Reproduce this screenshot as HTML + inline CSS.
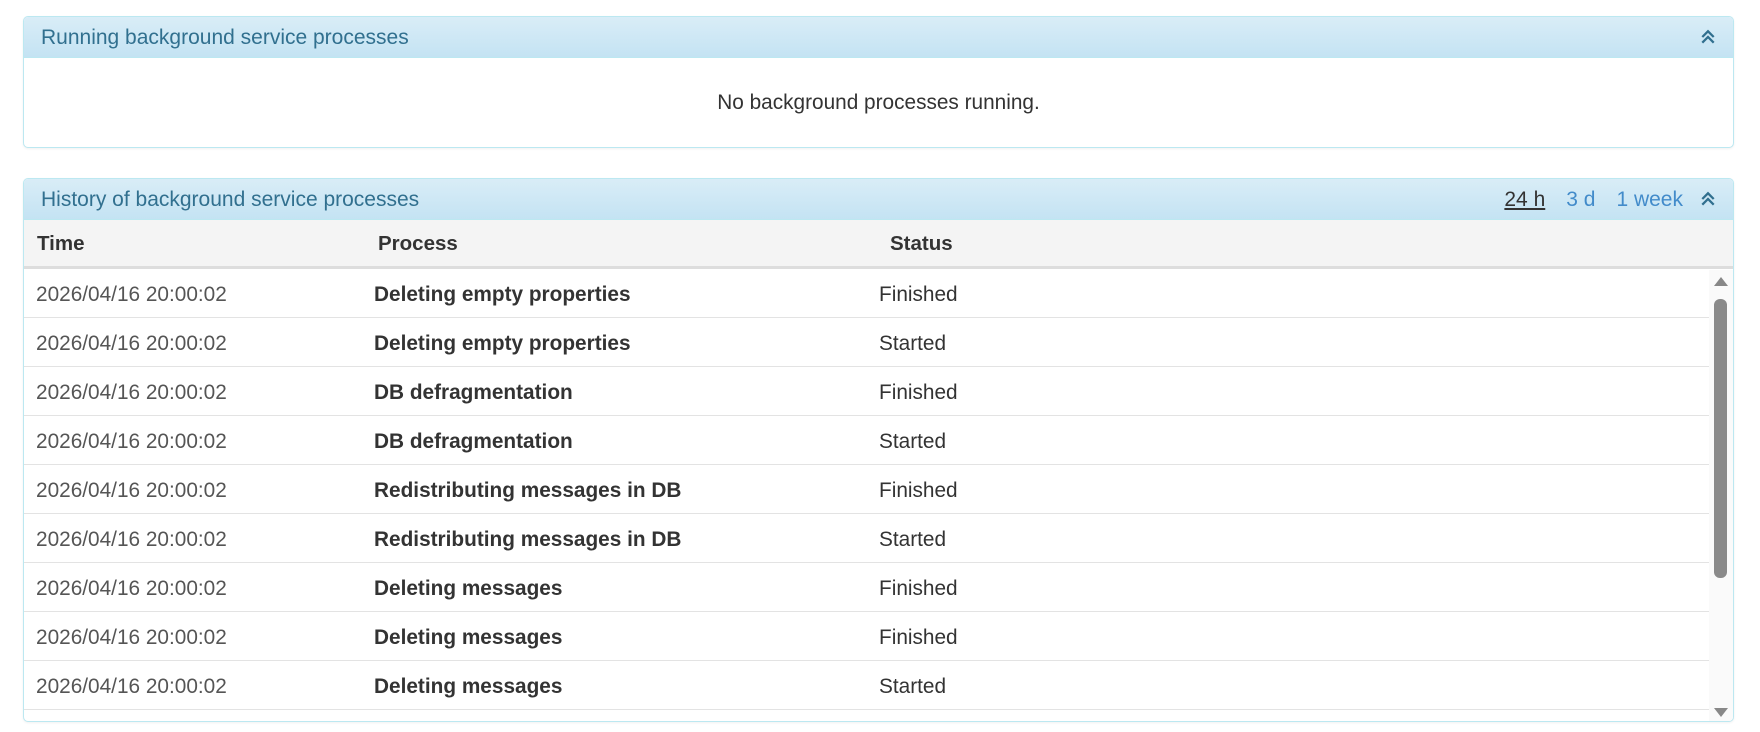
<!DOCTYPE html>
<html><head><style>
*{box-sizing:border-box;margin:0;padding:0}
body{width:1760px;height:732px;background:#fff;font-family:"Liberation Sans",Arial,sans-serif;position:relative;overflow:hidden;color:#333}
.panel{position:absolute;left:23px;width:1711px;border:1px solid #bce8f1;border-radius:5px;background:#fff;box-shadow:0 1px 2px rgba(0,0,0,.06);overflow:hidden}
.ph{height:41px;background:linear-gradient(#d9edf7,#c4e3f3);border-bottom:1px solid #bce8f1;color:#31708f;font-size:21px;line-height:42px;padding-left:17px;position:relative}
.chev{position:absolute;right:17px;top:12px}
.links{position:absolute;right:50px;top:0;font-size:21px}
.links span{margin-left:21px;color:#428bca}
.links span.act{color:#333;text-decoration:underline}
.thead{height:49px;background:#f4f4f4;border-bottom:3px solid #ddd;font-weight:bold;font-size:20.5px;position:relative}
.thead div,.row div{position:absolute;top:0}
.row{height:49px;border-bottom:1px solid #e3e3e3;position:relative;font-size:20.8px;width:1686px}
.row .t{left:12px;color:#555;line-height:51px}
.row .p{left:350px;font-weight:bold;line-height:51px}
.row .s{left:855px;line-height:51px}
.sb{position:absolute;right:0;top:91px;width:24px;bottom:0;background:#fafafa}
</style></head><body>
<div class="panel" style="top:16px;height:132px">
<div class="ph">Running background service processes
<svg class="chev" width="16" height="16" viewBox="0 0 14 14"><path d="M2 7 L7 2 L12 7 M2 12 L7 7 L12 12" fill="none" stroke="#31708f" stroke-width="2"/></svg></div>
<div style="text-align:center;font-size:20.8px;line-height:90px">No background processes running.</div>
</div>
<div class="panel" style="top:178px;height:544px">
<div class="ph">History of background service processes
<div class="links"><span class="act">24 h</span><span>3 d</span><span>1 week</span></div>
<svg class="chev" width="16" height="16" viewBox="0 0 14 14"><path d="M2 7 L7 2 L12 7 M2 12 L7 7 L12 12" fill="none" stroke="#31708f" stroke-width="2"/></svg></div>
<div class="thead"><div style="left:13px;line-height:47px">Time</div><div style="left:354px;line-height:47px">Process</div><div style="left:866px;line-height:47px">Status</div></div>
<div class="row"><div class="t">2026/04/16 20:00:02</div><div class="p">Deleting empty properties</div><div class="s">Finished</div></div>
<div class="row"><div class="t">2026/04/16 20:00:02</div><div class="p">Deleting empty properties</div><div class="s">Started</div></div>
<div class="row"><div class="t">2026/04/16 20:00:02</div><div class="p">DB defragmentation</div><div class="s">Finished</div></div>
<div class="row"><div class="t">2026/04/16 20:00:02</div><div class="p">DB defragmentation</div><div class="s">Started</div></div>
<div class="row"><div class="t">2026/04/16 20:00:02</div><div class="p">Redistributing messages in DB</div><div class="s">Finished</div></div>
<div class="row"><div class="t">2026/04/16 20:00:02</div><div class="p">Redistributing messages in DB</div><div class="s">Started</div></div>
<div class="row"><div class="t">2026/04/16 20:00:02</div><div class="p">Deleting messages</div><div class="s">Finished</div></div>
<div class="row"><div class="t">2026/04/16 20:00:02</div><div class="p">Deleting messages</div><div class="s">Finished</div></div>
<div class="row"><div class="t">2026/04/16 20:00:02</div><div class="p">Deleting messages</div><div class="s">Started</div></div>
<div class="sb">
<svg style="position:absolute;left:5px;top:6px" width="14" height="10"><path d="M0 10 L7 1 L14 10Z" fill="#888"/></svg>
<div style="position:absolute;left:5px;top:29px;width:13px;height:279px;background:#8a8a8a;border-radius:6px"></div>
<svg style="position:absolute;left:5px;bottom:3px" width="14" height="10"><path d="M0 0 L7 9 L14 0Z" fill="#888"/></svg>
</div>
</div>
</body></html>
